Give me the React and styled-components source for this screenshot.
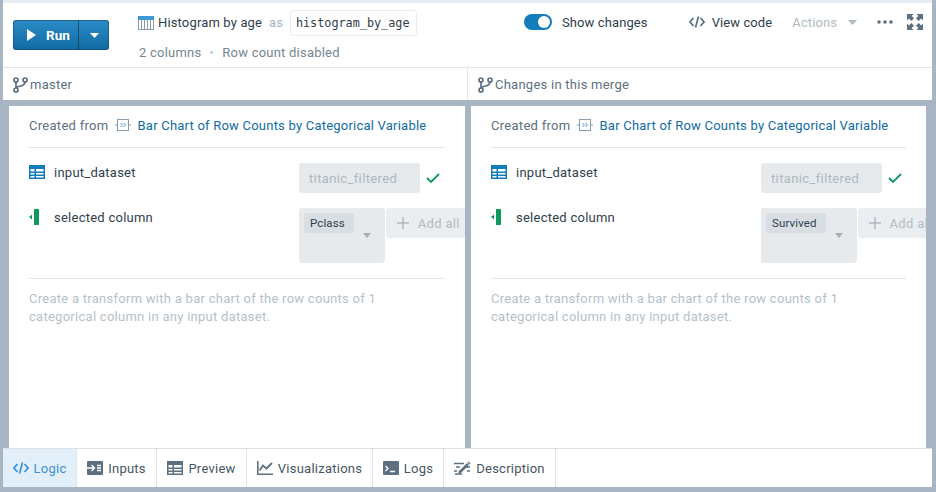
import React from 'react'
import styled, { createGlobalStyle } from 'styled-components'

const Global = createGlobalStyle`
  html, body { margin: 0; padding: 0; background: #a7b6c2; }
  * { box-sizing: border-box; }
  body { font-family: Roboto, "Liberation Sans", sans-serif; font-size: 13px; color: #30404d; }
`

const Frame = styled.div`
  width: 936px;
  height: 492px;
  overflow: hidden;
  display: flex;
  flex-direction: column;
  background: #a7b6c2;
`
const Main = styled.div`
  flex: 1;
  display: flex;
  flex-direction: column;
  margin: 0 4px 5px 3px;
  min-height: 0;
`
const TopStrip = styled.div`
  height: 3px;
  flex: none;
  background: #e6eef4;
`
const Header = styled.header`
  height: 65px;
  flex: none;
  background: #fff;
  border-bottom: 1px solid #e1e8ed;
  display: flex;
  align-items: flex-start;
  padding-left: 10px;
`
const RunButton = styled.div`
  margin-top: 17px;
  width: 96px;
  height: 30px;
  display: flex;
  border-radius: 3px;
  color: #fff;
  background: linear-gradient(#2b8ac6, #106ba3);
  box-shadow: inset 0 0 0 1px rgba(16, 22, 26, 0.3);
`
const RunPart = styled.div`
  width: 66px;
  display: flex;
  align-items: center;
  padding-left: 14px;
  gap: 10px;
  font-weight: 700;
  font-size: 13.5px;
  border-right: 1px solid rgba(16, 22, 26, 0.45);
`
const RunCaret = styled.div`
  flex: 1;
  display: flex;
  align-items: center;
  justify-content: center;
`
const Meta = styled.div`
  margin-left: 29px;
  padding-top: 7px;
`
const TitleRow = styled.div`
  display: flex;
  align-items: center;
  height: 26px;
`
const Title = styled.span`
  margin-left: 4px;
  padding-bottom: 1px;
  letter-spacing: 0.15px;
  color: #30404d;
`
const As = styled.span`
  margin-left: 7px;
  padding-bottom: 1px;
  color: #a7b6c2;
`
const NameBox = styled.div`
  margin-left: 7px;
  width: 127px;
  height: 26px;
  padding-left: 5px;
  display: flex;
  align-items: center;
  border: 1px solid #e9edf0;
  border-radius: 3px;
  font-family: "DejaVu Sans Mono", "Liberation Mono", monospace;
  font-size: 11.8px;
  color: #30404d;
`
const SubRow = styled.div`
  display: flex;
  align-items: center;
  margin-top: 9px;
  padding-left: 1px;
  color: #738694;
  letter-spacing: 0.22px;
`
const Dot = styled.span`
  width: 3px;
  height: 3px;
  margin: 0 9px;
  border-radius: 50%;
  background: #bfccd6;
`
const Tools = styled.div`
  margin-left: auto;
  display: flex;
  align-items: center;
  height: 22px;
  margin-top: 8px;
  padding-right: 9px;
`
const Toggle = styled.div`
  width: 28px;
  height: 16px;
  border-radius: 8px;
  background: #137cbd;
  display: flex;
  justify-content: flex-end;
  align-items: center;
  padding-right: 2px;
`
const Knob = styled.span`
  width: 12px;
  height: 12px;
  border-radius: 50%;
  background: #fff;
`
const ToolText = styled.span`
  margin-left: ${p => p.$left || 0}px;
  color: ${p => (p.$muted ? '#b0bbc4' : '#30404d')};
  letter-spacing: 0.1px;
  white-space: nowrap;
`
const ToolIcon = styled.span`
  display: flex;
  margin-left: ${p => p.$left || 0}px;
`
const Branches = styled.div`
  height: 32px;
  flex: none;
  background: #fff;
  display: grid;
  grid-template-columns: 464px 1fr;
`
const Branch = styled.div`
  display: flex;
  align-items: center;
  gap: 2px;
  color: #5c7080;
  letter-spacing: 0.25px;
  padding-left: ${p => p.$pad}px;
  padding-top: 1px;
  & + & { border-left: 1px solid #e1e8ed; }
`
const Panels = styled.div`
  flex: 1;
  min-height: 0;
  display: grid;
  grid-template-columns: 456px 455px;
  gap: 6px;
  padding: 6px 0 0 6px;
`
const Panel = styled.section`
  background: #fff;
  padding: 0 20px;
  overflow: hidden;
`
const CreatedRow = styled.div`
  height: 42px;
  padding-bottom: 3px;
  display: flex;
  align-items: center;
  border-bottom: 1px solid #e1e8ed;
  color: #5c7080;
  letter-spacing: 0.29px;
  white-space: nowrap;
`
const CreatedIcon = styled.span`
  display: flex;
  margin: 0 7px 0 6px;
`
const TemplateLink = styled.a`
  color: #106ba3;
  letter-spacing: 0.22px;
`
const Field = styled.div`
  display: flex;
  align-items: flex-start;
  margin-top: ${p => p.$top}px;
`
const FieldLabel = styled.div`
  width: 270px;
  flex: none;
  display: flex;
  align-items: center;
  height: 18px;
  color: #30404d;
  letter-spacing: 0.25px;
`
const LabelIcon = styled.span`
  width: 25px;
  flex: none;
  display: flex;
`
const DatasetBox = styled.div`
  width: 120.5px;
  height: 30px;
  flex: none;
  display: flex;
  align-items: center;
  padding-left: 10px;
  border-radius: 3px;
  background: #e6eaed;
  color: #adb8c1;
  letter-spacing: 0.37px;
`
const Check = styled.span`
  display: flex;
  margin: 9px 0 0 5px;
`
const SelectBox = styled.div`
  position: relative;
  min-height: 55px;
  flex: none;
  padding: 5px 31px 5px 5px;
  border-radius: 3px;
  background: #e6eaed;
`
const Chip = styled.span`
  display: inline-flex;
  align-items: center;
  height: 20px;
  padding: 0 9px 0 6px;
  border-radius: 3px;
  background: #d8dee3;
  color: #30404d;
  font-size: 11.5px;
  letter-spacing: 0.12px;
`
const Caret = styled.span`
  position: absolute;
  right: 14px;
  top: 25px;
  width: 0;
  height: 0;
  border: 4px solid transparent;
  border-top: 5px solid #a0aeb9;
  border-bottom: 0;
`
const AddAll = styled.div`
  width: 90px;
  height: 30px;
  flex: none;
  margin-left: 1px;
  display: flex;
  align-items: center;
  gap: 9px;
  padding-left: 11px;
  border-radius: 3px;
  background: #ebeef0;
  color: #b0bbc4;
  letter-spacing: 0.3px;
  white-space: nowrap;
`
const Description = styled.p`
  margin: 15px 0 0;
  padding: 11px 30px 0 0;
  border-top: 1px solid #e1e8ed;
  line-height: 18px;
  color: #b5bfc8;
  letter-spacing: 0.27px;
`
const Tabs = styled.nav`
  height: 39px;
  flex: none;
  background: #fff;
  border-top: 1px solid #d8e1e8;
  display: flex;
`
const Tab = styled.div`
  width: ${p => p.$w}px;
  display: flex;
  align-items: center;
  justify-content: center;
  gap: 5px;
  border-right: 1px solid #dde5ea;
  background: ${p => (p.$active ? '#e3eff8' : '#fff')};
  color: ${p => (p.$active ? '#3a91d4' : '#455663')};
  letter-spacing: 0.25px;
`

const Svg = ({ w = 16, h = 16, vb, children }) => (
  <svg width={w} height={h} viewBox={vb || `0 0 ${w} ${h}`} fill="none">{children}</svg>
)

const BranchIcon = () => (
  <Svg w={15} h={16}>
    <g stroke="#5c7080" strokeWidth="1.7">
      <circle cx="3" cy="3" r="2" />
      <circle cx="12" cy="3" r="2" />
      <circle cx="3" cy="13" r="2" />
      <path d="M3 5v6M12 5c0 3-2 3.500-4.500 4S3.500 10 3 11" />
    </g>
  </Svg>
)
const CodeIcon = ({ color = '#5c7080' }) => (
  <Svg w={16} h={14}>
    <path d="M4.500 3 1 7l3.500 4M11.500 3 15 7l-3.500 4M9.500 1.500l-3 11" stroke={color} strokeWidth="1.700" />
  </Svg>
)
const TableIcon = ({ color = '#137cbd' }) => (
  <Svg w={16} h={14}>
    <path fillRule="evenodd" d="M0 0h16v14H0zM1.500 4v2.500h4V4zm5.500 0v2.500h7.500V4zM1.500 8v1.500h4V8zm5.500 0v1.500h7.500V8zm-5.500 3v1.500h4V11zm5.500 0v1.500h7.500V11z" fill={color} />
  </Svg>
)
const HistogramIcon = () => (
  <Svg w={16} h={14}>
    <rect x=".5" y=".5" width="15" height="13" fill="#fff" stroke="#8a9ba8" />
    <rect x="0" y="0" width="16" height="4" fill="#3d9ad6" />
    <path d="M3.500 4v9.500M6.500 4v9.500M9.500 4v9.500M12.500 4v9.500" stroke="#8a9ba8" />
  </Svg>
)
const ColumnIcon = () => (
  <Svg w={11} h={16}>
    <rect x="5" y="0" width="5" height="16" rx=".5" fill="#0f9960" />
    <path d="M0 8l3-2.500v5z" fill="#0f9960" />
  </Svg>
)
const CheckIcon = () => (
  <Svg w={16} h={12}>
    <path d="M2 6l4 4 8-8" stroke="#0f9960" strokeWidth="1.800" />
  </Svg>
)
const TemplateIcon = () => (
  <Svg w={16} h={14}>
    <rect x="2.500" y="1.500" width="11" height="11" stroke="#8a9ba8" />
    <path d="M0 7h2M14 7h2" stroke="#8a9ba8" />
    <path d="M5.500 5l2 2-2 2M8.500 5l2 2-2 2" stroke="#4f8fe0" />
  </Svg>
)
const ExpandIcon = () => (
  <Svg w={16} h={16}>
    <g fill="#5c7080">
      <path d="M0 0h6.500L4.600 1.900 7 4.300 4.300 7 1.900 4.600 0 6.500z" />
      <path d="M16 0v6.500l-1.900-1.900L11.700 7 9 4.300l2.400-2.400L9.500 0z" />
      <path d="M0 16V9.500l1.900 1.900L4.300 9 7 11.700l-2.400 2.400L6.500 16z" />
      <path d="M16 16H9.500l1.900-1.900L9 11.700 11.700 9l2.400 2.400L16 9.500z" />
    </g>
  </Svg>
)
const DotsIcon = () => (
  <Svg w={16} h={4}>
    <circle cx="2" cy="2" r="1.800" fill="#5c7080" />
    <circle cx="8" cy="2" r="1.800" fill="#5c7080" />
    <circle cx="14" cy="2" r="1.800" fill="#5c7080" />
  </Svg>
)
const InputsIcon = () => (
  <Svg w={16} h={14}>
    <rect x="0" y="0" width="16" height="14" rx="1" fill="#5c7080" />
    <path d="M0 7h7M4.500 4l3 3-3 3M10 4.500h4M10 7h4M10 9.500h4" stroke="#fff" strokeWidth="1.300" />
  </Svg>
)
const ChartIcon = () => (
  <Svg w={16} h={14}>
    <path d="M.8 0v13.200H16" stroke="#5c7080" strokeWidth="1.600" />
    <path d="M2.500 9.500l3.500-5 3.500 3L15 2" stroke="#5c7080" strokeWidth="1.800" />
  </Svg>
)
const ConsoleIcon = () => (
  <Svg w={16} h={14}>
    <rect x="0" y="0" width="16" height="14" rx="1" fill="#5c7080" />
    <path d="M2.500 5l2.500 2.500L2.500 10M7 10.500h5" stroke="#fff" strokeWidth="1.300" />
  </Svg>
)
const DescriptionIcon = () => (
  <Svg w={17} h={14}>
    <path d="M0 2.500h10M2 6h4M0 10h3M1 13h7M11 6h5M13 10h3" stroke="#5c7080" strokeWidth="1.400" />
    <path d="M5 12l9-9" stroke="#5c7080" strokeWidth="2.600" />
    <path d="M14 1l2 2" stroke="#5c7080" strokeWidth="1.400" />
  </Svg>
)
const Plus = () => (
  <Svg w={12} h={12}>
    <path d="M6 0v12M0 6h12" stroke="#b0bbc4" strokeWidth="1.500" />
  </Svg>
)

const DESCRIPTION = 'Create a transform with a bar chart of the row counts of 1 categorical column in any input dataset.'

function TransformPanel({ column }) {
  return (
    <Panel>
      <CreatedRow>
        Created from
        <CreatedIcon><TemplateIcon /></CreatedIcon>
        <TemplateLink>Bar Chart of Row Counts by Categorical Variable</TemplateLink>
      </CreatedRow>
      <Field $top={15}>
        <FieldLabel><LabelIcon><TableIcon /></LabelIcon>input_dataset</FieldLabel>
        <DatasetBox>titanic_filtered</DatasetBox>
        <Check><CheckIcon /></Check>
      </Field>
      <Field $top={15}>
        <FieldLabel><LabelIcon><ColumnIcon /></LabelIcon>selected column</FieldLabel>
        <SelectBox>
          <Chip>{column}</Chip>
          <Caret />
        </SelectBox>
        <AddAll><Plus />Add all</AddAll>
      </Field>
      <Description>{DESCRIPTION}</Description>
    </Panel>
  )
}

export default function App() {
  return (
    <Frame>
      <Global />
      <Main>
        <TopStrip />
        <Header>
          <RunButton>
            <RunPart>
              <Svg w={9} h={12}><path d="M0 0l9 6-9 6z" fill="#fff" /></Svg>
              Run
            </RunPart>
            <RunCaret><Svg w={9} h={5}><path d="M0 0h9L4.500 5z" fill="#fff" /></Svg></RunCaret>
          </RunButton>
          <Meta>
            <TitleRow>
              <HistogramIcon />
              <Title>Histogram by age</Title>
              <As>as</As>
              <NameBox>histogram_by_age</NameBox>
            </TitleRow>
            <SubRow>2 columns<Dot />Row count disabled</SubRow>
          </Meta>
          <Tools>
            <Toggle><Knob /></Toggle>
            <ToolText $left={10}>Show changes</ToolText>
            <ToolIcon $left={41}><CodeIcon /></ToolIcon>
            <ToolText $left={7}>View code</ToolText>
            <ToolText $left={20} $muted>Actions</ToolText>
            <ToolIcon $left={11}><Svg w={9} h={5}><path d="M0 0h9L4.500 5z" fill="#b0bbc4" /></Svg></ToolIcon>
            <ToolIcon $left={20}><DotsIcon /></ToolIcon>
            <ToolIcon $left={14}><ExpandIcon /></ToolIcon>
          </Tools>
        </Header>
        <Branches>
          <Branch $pad={10}><BranchIcon />master</Branch>
          <Branch $pad={10}><BranchIcon />Changes in this merge</Branch>
        </Branches>
        <Panels>
          <TransformPanel column="Pclass" />
          <TransformPanel column="Survived" />
        </Panels>
        <Tabs>
          <Tab $w={74} $active><CodeIcon color="#3a91d4" />Logic</Tab>
          <Tab $w={80}><InputsIcon />Inputs</Tab>
          <Tab $w={90}><TableIcon color="#5c7080" />Preview</Tab>
          <Tab $w={126}><ChartIcon />Visualizations</Tab>
          <Tab $w={71}><ConsoleIcon />Logs</Tab>
          <Tab $w={112}><DescriptionIcon />Description</Tab>
        </Tabs>
      </Main>
    </Frame>
  )
}
